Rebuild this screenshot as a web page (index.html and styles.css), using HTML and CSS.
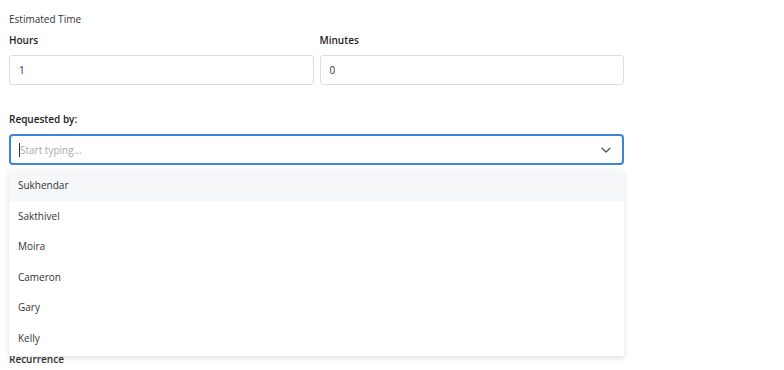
FILE: index.html
```html
<!DOCTYPE html>
<html lang="en">
<head>
<meta charset="UTF-8">
<title>Task form</title>
<link rel="stylesheet" href="styles.css">
</head>
<body>
<div class="form">
  <div class="section-title">Estimated Time</div>
  <div class="time-row">
    <div class="field">
      <label>Hours</label>
      <div class="input">1</div>
    </div>
    <div class="field">
      <label>Minutes</label>
      <div class="input">0</div>
    </div>
  </div>

  <div class="field requested">
    <label>Requested by:</label>
    <div class="combo">
      <div class="combo-input">
        <span class="caret"></span>
        <span class="placeholder">Start typing...</span>
        <svg class="chevron" width="12" height="12" viewBox="0 0 12 12">
          <path d="M2 4.2 L6 8 L10 4.2" fill="none" stroke="#555" stroke-width="1.3" stroke-linecap="round" stroke-linejoin="round"/>
        </svg>
      </div>
      <ul class="menu">
        <li class="active">Sukhendar</li>
        <li>Sakthivel</li>
        <li>Moira</li>
        <li>Cameron</li>
        <li>Gary</li>
        <li>Kelly</li>
      </ul>
    </div>
  </div>

  <div class="section-title recurrence">Recurrence</div>
</div>
</body>
</html>
```

FILE: styles.css
```css
body {
  margin: 0;
  font-family: "Open Sans", "Noto Sans", sans-serif;
  font-size: 10px;
  color: #222;
  background: #ffffff;
}
.form {
  width: 615px;
  padding: 12px 0 0 9px;
}
.section-title {
  line-height: 14px;
  color: #333;
}
.time-row {
  display: grid;
  grid-template-columns: 1fr 1fr;
  gap: 6px;
  margin-top: 7px;
}
.field label {
  display: block;
  font-weight: 600;
  line-height: 14px;
  color: #222;
}
.input {
  margin-top: 8px;
  height: 28px;
  border: 1px solid #dcdcdc;
  border-radius: 3px;
  padding: 0 9px;
  line-height: 28px;
  color: #333;
}
.requested {
  margin-top: 27px;
}
.combo {
  position: relative;
  margin-top: 8px;
}
.combo-input {
  height: 27px;
  border: 2px solid #3a86d6;
  border-radius: 4px;
  display: flex;
  align-items: center;
  padding: 0 8px;
}
.caret {
  width: 1px;
  height: 14px;
  background: #333;
}
.placeholder {
  color: #a8a8a8;
  flex: 1;
}
.chevron {
  margin-right: 2px;
}
.menu {
  position: absolute;
  top: 36px;
  left: 0;
  right: 0;
  margin: 0;
  padding: 0 0 2px;
  list-style: none;
  background: #ffffff;
  box-shadow: 0 2px 6px rgba(0,0,0,0.13);
  z-index: 2;
}
.menu li {
  height: 30.6px;
  line-height: 30px;
  padding-left: 9px;
  color: #333;
}
.menu li.active {
  background: #f6f7f9;
}
.recurrence {
  margin-top: 187px;
  font-weight: 600;
}
```
